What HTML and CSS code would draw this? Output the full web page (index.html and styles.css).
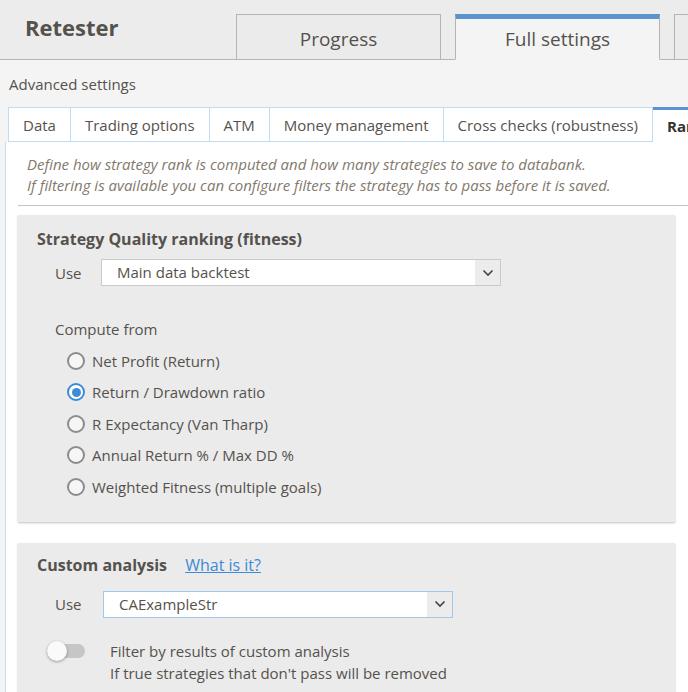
FILE: index.html
```html
<!DOCTYPE html>
<html lang="en">
<head>
  <meta charset="UTF-8">
  <title>Retester</title>
  <link rel="stylesheet" href="styles.css">
</head>
<body>

  <div class="header">
    <div class="app-title">Retester</div>
    <div class="top-tabs">
      <div class="top-tab">Progress</div>
      <div class="top-tab active">Full settings</div>
      <div class="top-tab more"></div>
    </div>
  </div>

  <div class="section-label">Advanced settings</div>

  <div class="sub-tabs">
    <span class="sub-tab">Data</span>
    <span class="sub-tab">Trading options</span>
    <span class="sub-tab">ATM</span>
    <span class="sub-tab">Money management</span>
    <span class="sub-tab">Cross checks (robustness)</span>
    <span class="sub-tab active">Ranking</span>
  </div>

  <div class="panel">
    <p class="intro">
      Define how strategy rank is computed and how many strategies to save to databank.<br>
      If filtering is available you can configure filters the strategy has to pass before it is saved.
    </p>
    <div class="divider"></div>

    <!-- fitness -->
    <div class="card fitness">
      <div class="card-title">Strategy Quality ranking (fitness)</div>
      <div class="use-row">
        <span class="use-label">Use</span>
        <div class="select">
          <span class="select-value">Main data backtest</span>
          <span class="select-arrow">
            <svg width="12" height="8" viewBox="0 0 12 8"><polyline points="1.5,1.5 6,6 10.5,1.5" fill="none" stroke="#444" stroke-width="1.6"/></svg>
          </span>
        </div>
      </div>
      <div class="compute-label">Compute from</div>
      <div class="radio-list">
        <label class="radio"><span class="dot"></span>Net Profit (Return)</label>
        <label class="radio checked"><span class="dot"></span>Return / Drawdown ratio</label>
        <label class="radio"><span class="dot"></span>R Expectancy (Van Tharp)</label>
        <label class="radio"><span class="dot"></span>Annual Return % / Max DD %</label>
        <label class="radio"><span class="dot"></span>Weighted Fitness (multiple goals)</label>
      </div>
    </div>

    <!-- custom analysis -->
    <div class="card custom">
      <div class="card-title">Custom analysis <a class="help-link" href="#">What is it?</a></div>
      <div class="use-row">
        <span class="use-label">Use</span>
        <div class="select focused">
          <span class="select-value">CAExampleStr</span>
          <span class="select-arrow">
            <svg width="12" height="8" viewBox="0 0 12 8"><polyline points="1.5,1.5 6,6 10.5,1.5" fill="none" stroke="#444" stroke-width="1.6"/></svg>
          </span>
        </div>
      </div>
      <div class="toggle-row">
        <span class="toggle"><span class="knob"></span></span>
        <div class="toggle-text">
          Filter by results of custom analysis<br>
          If true strategies that don't pass will be removed
        </div>
      </div>
    </div>
  </div>

</body>
</html>
```

FILE: styles.css
```css
* {
  margin: 0;
  padding: 0;
  box-sizing: border-box;
}

body {
  width: 688px;
  height: 692px;
  overflow: hidden;
  background-color: #f4f4f4;
  font-family: "Open Sans", "DejaVu Sans", sans-serif;
  color: #55524e;
}

/* top bar */
.header {
  height: 60px;
  background-color: #ececec;
  border-bottom: 1px solid #b4b4b4;
  display: flex;
  align-items: flex-end;
}

.app-title {
  width: 236px;
  flex-shrink: 0;
  align-self: flex-start;
  padding: 12px 0 0 25px;
  font-size: 22px;
  line-height: 30px;
  font-weight: bold;
}

.top-tabs {
  display: flex;
  gap: 14px;
  margin-bottom: -1px;
}

.top-tab {
  width: 205px;
  flex-shrink: 0;
  height: 46px;
  border: 1px solid #b4b4b4;
  background-color: #ebebeb;
  font-size: 19px;
  display: flex;
  justify-content: center;
  align-items: center;
  padding-top: 3px;
}

.top-tab.active {
  background-color: #f4f4f4;
  border-top: 5px solid #5b93cf;
  border-bottom-color: #f4f4f4;
  padding-top: 0;
}

.top-tab.more {
  width: 40px;
}

/* sub tabs */
.section-label {
  font-size: 15px;
  line-height: 20px;
  margin: 14px 0 0 9px;
}

.sub-tabs {
  display: flex;
  margin: 13px 0 0 8px;
  white-space: nowrap;
}

.sub-tab {
  height: 35px;
  padding: 0 14px;
  font-size: 15px;
  background-color: #fff;
  border: 1px solid #bfdcf2;
  border-left: none;
  display: flex;
  align-items: center;
}

.sub-tab:first-child {
  border-left: 1px solid #bfdcf2;
}

.sub-tab.active {
  border-top: 3px solid #5b93cf;
  border-bottom-color: #fff;
  font-weight: bold;
  color: #333;
}

/* panel */
.panel {
  margin-left: 5px;
  width: 720px;
  height: 560px;
  background-color: #fff;
  border-left: 1px solid #c6dcef;
  padding: 12px 0 0 12px;
}

.intro {
  font-size: 15px;
  font-style: italic;
  line-height: 21px;
  color: #83796d;
  padding-left: 9px;
}

.divider {
  border-top: 1px solid #c4c4c4;
  margin: 9px 0 9px 0;
}

.card {
  width: 657px;
  background-color: #ebebeb;
  box-shadow: 0 1px 2px rgba(0, 0, 0, 0.25);
  padding: 14px 0 19px 19px;
}

.card.custom {
  margin-top: 21px;
  padding-top: 12px;
}

.card-title {
  font-size: 16px;
  font-weight: bold;
  line-height: 20px;
}

.help-link {
  font-size: 16px;
  font-weight: normal;
  color: #3d8ad6;
  margin-left: 14px;
}

.use-row {
  display: flex;
  align-items: center;
  margin: 10px 0 0 18px;
  font-size: 15px;
}

.use-label {
  width: 46px;
}

.select {
  width: 400px;
  height: 27px;
  display: flex;
  background-color: #fff;
  border: 1px solid #cacaca;
}

.select-value {
  flex: 1;
  padding-left: 15px;
  line-height: 25px;
}

.select-arrow {
  width: 25px;
  background-color: #ececec;
  display: flex;
  justify-content: center;
  align-items: center;
}

.custom .use-row {
  margin-top: 16px;
}

.custom .use-label {
  width: 48px;
}

.select.focused {
  width: 350px;
  border-color: #9ec8ee;
}

.compute-label {
  font-size: 15px;
  line-height: 20px;
  margin: 33px 0 0 18px;
}

.radio-list {
  margin: 6px 0 0 30px;
}

.radio {
  height: 31.5px;
  display: flex;
  align-items: center;
  font-size: 15px;
}

.radio .dot {
  width: 18px;
  height: 18px;
  border: 2px solid #8c8c8c;
  border-radius: 50%;
  background-color: #f6f6f6;
  margin-right: 7px;
  display: flex;
  justify-content: center;
  align-items: center;
}

.radio.checked .dot {
  border-color: #3d8ad6;
  background-color: #fff;
}

.radio.checked .dot:after {
  content: '';
  width: 9px;
  height: 9px;
  border-radius: 50%;
  background-color: #3d8ad6;
}

/* toggle */
.toggle-row {
  display: flex;
  margin: 22px 0 0 10px;
  font-size: 15px;
  line-height: 22px;
}

.toggle {
  width: 38px;
  height: 14px;
  margin-top: 4px;
  margin-right: 25px;
  border-radius: 7px;
  background-color: #c6c6c6;
  position: relative;
}

.knob {
  position: absolute;
  left: 0;
  top: -3px;
  width: 20px;
  height: 20px;
  border-radius: 50%;
  background-color: #fafafa;
  box-shadow: 0 1px 3px rgba(0, 0, 0, 0.35);
}
```
